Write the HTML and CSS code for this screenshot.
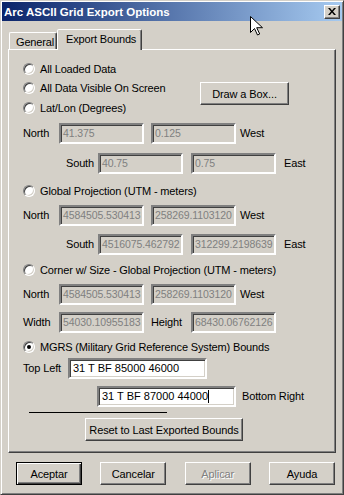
FILE: index.html
```html
<!DOCTYPE html>
<html lang="en">
<head>
    <meta charset="UTF-8">
    <title>Arc ASCII Grid Export Options</title>
    <link rel="stylesheet" href="styles.css">
</head>
<body>
    <div class="window">
        <div class="titlebar">
            <span class="title">Arc ASCII Grid Export Options</span>
            <span class="close">
                <svg width="8" height="7" viewBox="0 0 8 7">
                    <path d="M0 0h2l2 2.5 2-2.5h2l-3 3.5 3 3.5h-2l-2-2.5-2 2.5h-2l3-3.5z" fill="#000"/>
                </svg>
            </span>
        </div>

        <div class="dialog">
            <div class="tabs">
                <div class="tab">General</div>
                <div class="tab active">Export Bounds</div>
            </div>

            <div class="panel">
                <div class="opt"><span class="radio"></span>All Loaded Data</div>

                <div class="opt-group">
                    <div class="opt"><span class="radio"></span>All Data Visible On Screen</div>
                    <div class="opt"><span class="radio"></span>Lat/Lon (Degrees)</div>
                    <button class="btn draw">Draw a Box...</button>
                </div>

                <div class="fields mt6">
                    <span class="lbl">North</span>
                    <span class="edit off">41.375</span>
                    <span class="edit off">0.125</span>
                    <span class="side">West</span>
                </div>
                <div class="fields mt8">
                    <span class="lbl south">South</span>
                    <span class="edit off">40.75</span>
                    <span class="edit off wide-gap">0.75</span>
                    <span class="side east">East</span>
                </div>

                <div class="opt mt9"><span class="radio"></span>Global Projection (UTM - meters)</div>
                <div class="fields mt5">
                    <span class="lbl">North</span>
                    <span class="edit off">4584505.530413</span>
                    <span class="edit off">258269.1103120</span>
                    <span class="side">West</span>
                </div>
                <div class="fields mt7">
                    <span class="lbl south">South</span>
                    <span class="edit off">4516075.462792</span>
                    <span class="edit off wide-gap">312299.2198639</span>
                    <span class="side east">East</span>
                </div>

                <div class="opt mt7"><span class="radio"></span>Corner w/ Size - Global Projection (UTM - meters)</div>
                <div class="fields mt5">
                    <span class="lbl">North</span>
                    <span class="edit off">4584505.530413</span>
                    <span class="edit off">258269.1103120</span>
                    <span class="side">West</span>
                </div>
                <div class="fields mt6">
                    <span class="lbl">Width</span>
                    <span class="edit off">54030.10955183</span>
                    <span class="lbl height">Height</span>
                    <span class="edit off">68430.06762126</span>
                </div>

                <div class="opt mt6"><span class="radio checked"></span>MGRS (Military Grid Reference System) Bounds</div>
                <div class="fields mt2">
                    <span class="lbl topleft">Top Left</span>
                    <span class="edit on">31 T BF 85000 46000</span>
                </div>
                <div class="fields mt6">
                    <span class="edit on bottomright">31 T BF 87000 44000<span class="caret"></span></span>
                    <span class="side br-label">Bottom Right</span>
                </div>

                <div class="rule"></div>
                <button class="btn reset">Reset to Last Exported Bounds</button>
            </div>

            <div class="buttons">
                <button class="btn default">Aceptar</button>
                <button class="btn">Cancelar</button>
                <button class="btn disabled">Aplicar</button>
                <button class="btn">Ayuda</button>
            </div>
        </div>

        <!-- mouse pointer captured in the screenshot -->
        <svg class="pointer" width="13" height="21" viewBox="0 0 13 21">
            <path d="M0.5 0.5v16l4-4 3 6.5 2.2-1-3-6.3h5.8z" fill="#fff" stroke="#000" stroke-width="1"/>
        </svg>
    </div>
</body>
</html>
```

FILE: styles.css
```css
body {
    margin: 0;
    padding: 0;
    background-color: #d4d0c8;
    font-family: "Liberation Sans", Arial, sans-serif;
    font-size: 11px;
    letter-spacing: -0.15px;
    color: #000;
}
.window {
    position: relative;
    width: 344px;
    height: 495px;
    box-sizing: border-box;
    padding: 1px;
    background-color: #d4d0c8;
    border: 1px solid;
    border-color: #d4d0c8 #404040 #404040 #d4d0c8;
    box-shadow: inset 1px 1px #fff, inset -1px -1px #808080;
    overflow: hidden;
}
.titlebar {
    height: 19px;
    display: flex;
    align-items: center;
    justify-content: space-between;
    padding: 0 2px 0 2px;
    background: linear-gradient(to right, #0a246a, #a6caf0);
}
.title {
    color: #fff;
    font-weight: bold;
    font-size: 11.5px;
    letter-spacing: 0;
}
.close {
    width: 16px;
    height: 14px;
    box-sizing: border-box;
    display: flex;
    align-items: center;
    justify-content: center;
    background-color: #d4d0c8;
    border: 1px solid;
    border-color: #fff #404040 #404040 #fff;
    box-shadow: inset -1px -1px #808080;
}
.dialog {
    padding: 8px 6px 0 6px;
}
.tabs {
    height: 20px;
    display: flex;
    align-items: flex-end;
}
.tab {
    height: 17px;
    box-sizing: border-box;
    padding: 3px 0 0 6px;
    width: 48px;
    margin-left: 1px;
    border: 1px solid;
    border-bottom: none;
    border-color: #fff #404040 transparent #fff;
    border-radius: 2px 2px 0 0;
    box-shadow: inset -1px 0 #808080;
}
.tab.active {
    position: relative;
    z-index: 1;
    width: 85px;
    height: 21px;
    margin-left: 0;
    margin-bottom: -1px;
    padding: 3px 0 0 8px;
    background-color: #d4d0c8;
}
.panel {
    height: 404px;
    box-sizing: border-box;
    padding: 11px 0 0 14px;
    border: 1px solid;
    border-color: #fff #404040 #404040 #fff;
    box-shadow: inset -1px -1px #808080;
}
.opt {
    height: 16px;
    display: flex;
    align-items: center;
}
.opt-group {
    display: grid;
    grid-template-columns: 177px 89px;
    grid-template-rows: 16px 16px;
    row-gap: 4px;
    margin-top: 3px;
}
.radio {
    width: 12px;
    height: 12px;
    box-sizing: border-box;
    margin-right: 5px;
    border-radius: 50%;
    background-color: #fff;
    border: 1px solid;
    border-color: #808080 #fff #fff #808080;
    box-shadow: inset 1px 1px #404040, inset -1px -1px #d4d0c8;
    display: flex;
    align-items: center;
    justify-content: center;
}
.radio.checked::after {
    content: "";
    width: 4px;
    height: 4px;
    border-radius: 50%;
    background-color: #000;
}
.fields {
    height: 22px;
    display: flex;
    align-items: center;
}
.mt2 { margin-top: 2px; }
.mt5 { margin-top: 5px; }
.mt6 { margin-top: 6px; }
.mt7 { margin-top: 7px; }
.mt8 { margin-top: 8px; }
.mt9 { margin-top: 9px; }
.lbl {
    width: 36px;
}
.lbl.south {
    width: 75px;
    box-sizing: border-box;
    padding-right: 4px;
    text-align: right;
}
.lbl.height {
    width: 40px;
    margin-left: 7px;
}
.lbl.topleft {
    width: 45px;
}
.edit {
    width: 85px;
    height: 21px;
    box-sizing: border-box;
    padding: 0 0 0 2px;
    line-height: 17px;
    white-space: nowrap;
    overflow: hidden;
    border: 2px solid;
    border-color: #808080 #fff #fff #808080;
    box-shadow: inset 1px 1px #404040, inset -1px -1px #d4d0c8;
}
.edit + .edit {
    margin-left: 7px;
}
.edit.wide-gap {
    margin-left: 8px;
}
.edit.off {
    color: #808080;
    background-color: #d4d0c8;
    font-size: 10.5px;
    letter-spacing: -0.1px;
}
.edit.on {
    width: 139px;
    padding-left: 3px;
    background-color: #fff;
    font-size: 11px;
    letter-spacing: 0;
    display: flex;
    align-items: center;
}
.edit.bottomright {
    margin-left: 74px;
}
.caret {
    width: 1px;
    height: 13px;
    background-color: #000;
}
.side {
    margin-left: 4px;
}
.side.east {
    margin-left: 8px;
}
.side.br-label {
    margin-left: 6px;
}
.btn {
    height: 23px;
    box-sizing: border-box;
    padding: 0;
    font-family: "Liberation Sans", Arial, sans-serif;
    font-size: 11px;
    letter-spacing: -0.1px;
    color: #000;
    background-color: #d4d0c8;
    border: 1px solid;
    border-color: #fff #404040 #404040 #fff;
    box-shadow: inset -1px -1px #808080;
    border-radius: 0;
}
.btn.draw {
    grid-column: 2;
    grid-row: 1 / 3;
    margin-top: 2px;
    width: 89px;
}
.rule {
    width: 138px;
    margin: 5px 0 0 6px;
    border-top: 1px solid #000;
}
.btn.reset {
    display: block;
    width: 158px;
    margin: 5px 0 0 62px;
}
.buttons {
    display: flex;
    justify-content: space-between;
    margin-top: 9px;
    padding: 0 1px 0 8px;
}
.buttons .btn {
    width: 66px;
}
.btn.default {
    border-color: #000;
    box-shadow: inset 1px 1px #fff, inset -1px -1px #404040, inset -2px -2px #808080;
}
.btn.disabled {
    color: #808080;
    text-shadow: 1px 1px #fff;
}
.pointer {
    position: absolute;
    left: 249px;
    top: 15px;
}
```
